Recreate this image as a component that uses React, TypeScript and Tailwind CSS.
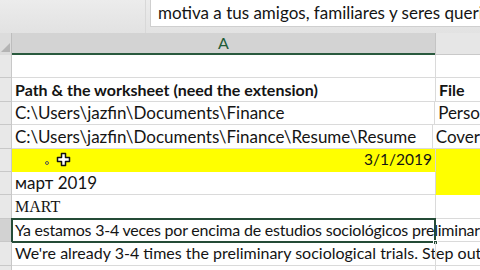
import React from 'react';

type Row = {
  a?: React.ReactNode;
  b?: string;
  yellowA?: boolean;
  yellowB?: boolean;
  aClass?: string;
  selected?: boolean;
};

const rows: Row[] = [
  {},
  { a: 'Path & the worksheet (need the extension)', b: 'File', aClass: 'font-bold text-[16px]' },
  { a: 'C:\\Users\\jazfin\\Documents\\Finance', b: 'Perso' },
  { a: 'C:\\Users\\jazfin\\Documents\\Finance\\Resume\\Resume', b: 'Cover' },
  { a: 'date', yellowA: true, yellowB: true },
  { a: 'март 2019', yellowB: true },
  { a: 'MART', aClass: "font-['Liberation_Serif',serif] text-[16px]" },
  {
    a: 'Ya estamos 3-4 veces por encima de estudios sociológicos preliminares',
    selected: true,
    aClass: 'text-[16px] tracking-[-0.22px]',
  },
  {
    a: "We're already 3-4 times the preliminary sociological trials. Step out of your comfort zone",
    aClass: 'text-[16px]',
  },
  {},
];

const Cursor = () => (
  <svg width="15" height="15" viewBox="0 0 15 15" className="shrink-0">
    <path
      d="M5.5 1.5h4v4h4v4h-4v4h-4v-4h-4v-4h4z"
      fill="#fff"
      stroke="#111"
      strokeWidth="1.5"
      strokeLinejoin="round"
    />
  </svg>
);

export default function App() {
  return (
    <div className="w-[480px] h-[270px] overflow-hidden bg-white font-['Lato',sans-serif] text-[#141414] relative">
      {/* formula bar */}
      <div className="h-[33px] flex bg-gradient-to-b from-[#ececec] to-[#e2e2e2]">
        <div className="w-[146px] border-r border-[#d8d8d8]" />
        <div className="ml-[4px] flex-1 h-[27px] bg-white border-l border-b border-[#cfcfcf] pl-[7px] text-[17px] leading-[26px] whitespace-nowrap overflow-hidden">
          motiva a tus amigos, familiares y seres queridos
        </div>
      </div>

      {/* column headers */}
      <div className="flex h-[22px]">
        <div className="w-[12px] bg-[#dcdcdc] border-r border-[#bdbdbd] relative overflow-hidden">
          <div className="absolute right-[1px] bottom-[3px] w-0 h-0 border-l-[9px] border-l-transparent border-b-[9px] border-b-[#b4b4b4]" />
        </div>
        <div className="w-[423px] bg-[#d3d3d3] border-b-2 border-[#2a5a3e] flex items-center justify-center text-[16px] text-[#1f5c38]">
          A
        </div>
        <div className="flex-1 bg-[#e6e6e6] border-l border-[#c4c4c4] border-b border-b-[#c9c9c9]" />
      </div>

      {/* rows */}
      {rows.map((r, i) => (
        <div key={i} className="flex h-[23.4px] relative">
          <div
            className={`w-[12px] border-r border-b border-[#c8c8c8] ${
              r.selected ? 'bg-[#d2d2d2]' : 'bg-[#e8e8e8]'
            }`}
          />
          <div
            className={`w-[423px] border-b flex items-center pl-[3px] pr-[3px] whitespace-nowrap ${
              r.yellowA ? 'bg-[#ffff00] border-[#ffff00]' : 'border-[#dadada]'
            } ${r.aClass ?? 'text-[17px]'}`}
          >
            {r.a === 'date' ? (
              <div className="flex items-center w-full">
                <span className="ml-[30px] w-[4px] h-[4px] rounded-full border border-[#555] mt-[6px]" />
                <span className="ml-[7px]">
                  <Cursor />
                </span>
                <span className="ml-auto text-[15.5px]">3/1/2019</span>
              </div>
            ) : (
              r.a
            )}
          </div>
          <div
            className={`flex-1 border-l border-b flex items-center pl-[3px] whitespace-nowrap ${
              r.yellowB ? 'bg-[#ffff00] border-[#ffff00] border-l-[#d6d6d6]' : 'border-[#dadada]'
            } ${i === 1 ? 'font-bold text-[16px]' : 'text-[17px]'}`}
          >
            {r.b}
          </div>
          {r.selected && (
            <div className="absolute left-[11px] top-[-1px] w-[425px] h-[25px] border-2 border-[#244b36] pointer-events-none">
              <div className="absolute right-[-4px] bottom-[-4px] w-[5px] h-[5px] bg-[#244b36] border border-white" />
            </div>
          )}
        </div>
      ))}
    </div>
  );
}
